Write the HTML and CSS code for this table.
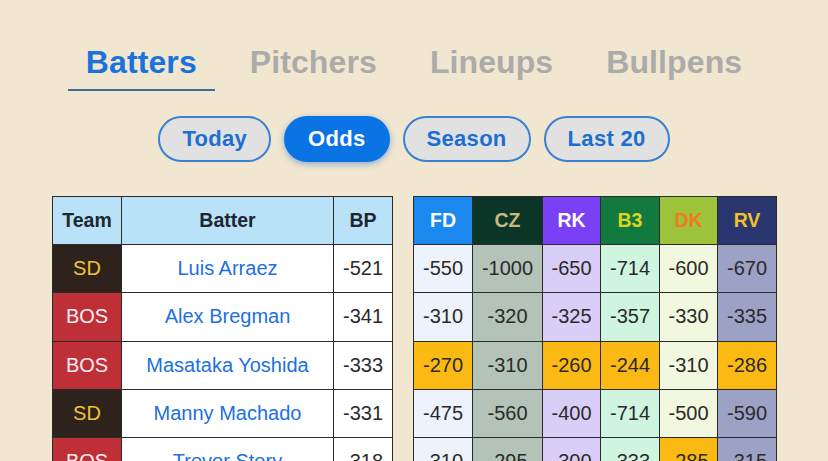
FILE: index.html
```html
<!DOCTYPE html>
<html>
<head>
<meta charset="utf-8">
<link rel="stylesheet" href="styles.css">
</head>
<body>
<div class="page">
  <nav class="tabs">
    <span class="tab active">Batters</span>
    <span class="tab">Pitchers</span>
    <span class="tab">Lineups</span>
    <span class="tab">Bullpens</span>
  </nav>
  <div class="pills">
    <span class="pill">Today</span>
    <span class="pill on">Odds</span>
    <span class="pill">Season</span>
    <span class="pill">Last 20</span>
  </div>
  <div class="tables">
    <table class="tbl left">
      <colgroup><col class="c-team"><col class="c-batter"><col class="c-bp"></colgroup>
      <thead><tr><th>Team</th><th>Batter</th><th>BP</th></tr></thead>
      <tbody>
        <tr><td class="sd">SD</td><td class="name">Luis Arraez</td><td class="bp">-521</td></tr>
        <tr><td class="bos">BOS</td><td class="name">Alex Bregman</td><td class="bp">-341</td></tr>
        <tr><td class="bos">BOS</td><td class="name">Masataka Yoshida</td><td class="bp">-333</td></tr>
        <tr><td class="sd">SD</td><td class="name">Manny Machado</td><td class="bp">-331</td></tr>
        <tr><td class="bos">BOS</td><td class="name">Trevor Story</td><td class="bp">-318</td></tr>
      </tbody>
    </table>
    <table class="tbl right">
      <colgroup><col class="c-fd"><col class="c-cz"><col class="c-rk"><col class="c-b3"><col class="c-dk"><col class="c-rv"></colgroup>
      <thead><tr><th class="fd">FD</th><th class="cz">CZ</th><th class="rk">RK</th><th class="b3">B3</th><th class="dk">DK</th><th class="rv">RV</th></tr></thead>
      <tbody>
        <tr><td class="fd">-550</td><td class="cz">-1000</td><td class="rk">-650</td><td class="b3">-714</td><td class="dk">-600</td><td class="rv">-670</td></tr>
        <tr><td class="fd">-310</td><td class="cz">-320</td><td class="rk">-325</td><td class="b3">-357</td><td class="dk">-330</td><td class="rv">-335</td></tr>
        <tr><td class="hi">-270</td><td class="cz">-310</td><td class="hi">-260</td><td class="hi">-244</td><td class="dk">-310</td><td class="hi">-286</td></tr>
        <tr><td class="fd">-475</td><td class="cz">-560</td><td class="rk">-400</td><td class="b3">-714</td><td class="dk">-500</td><td class="rv">-590</td></tr>
        <tr><td class="fd">-310</td><td class="cz">-295</td><td class="rk">-300</td><td class="b3">-333</td><td class="hi">-285</td><td class="rv">-315</td></tr>
      </tbody>
    </table>
  </div>
</div>
</body>
</html>
```
FILE: styles.css
```css
html, body {
  margin: 0;
  padding: 0;
}
body {
  background: #f1e6cf;
  font-family: "Liberation Sans", Arial, sans-serif;
  height: 461px;
  overflow: hidden;
}
.page {
  display: flex;
  flex-direction: column;
  align-items: center;
  padding-top: 42px;
}
.tabs {
  display: flex;
  gap: 17px;
}
.tab {
  font-size: 32px;
  font-weight: bold;
  line-height: 40px;
  color: #ababab;
  padding: 0 18px 7px;
  border-bottom: 2px solid transparent;
  letter-spacing: 0.1px;
}
.tab.active {
  color: #1a72dc;
  border-bottom-color: #3e6b96;
}
.pills {
  display: flex;
  gap: 13px;
  margin-top: 25px;
}
.pill {
  font-size: 22px;
  font-weight: bold;
  line-height: 42px;
  padding: 0 22px;
  letter-spacing: 0.3px;
  border: 2px solid #3a80d3;
  border-radius: 23px;
  background: #e2e1e1;
  color: #1b6fd3;
}
.pill.on {
  background: #0a74e4;
  border-color: #0a74e4;
  color: #fff;
  box-shadow: 0 2px 6px rgba(10, 100, 220, 0.45);
}
.tables {
  display: flex;
  gap: 20px;
  margin-top: 34px;
  padding-left: 1px;
}
.tbl {
  border-collapse: collapse;
  table-layout: fixed;
  font-size: 20px;
  color: #2a2a2a;
}
.tbl th, .tbl td {
  border: 1px solid #2b2b2b;
  padding: 0;
  text-align: center;
  white-space: nowrap;
  overflow: hidden;
}
.tbl tr {
  height: 48.3px;
}
.tbl thead tr {
  height: 48px;
}
.tbl th {
  font-weight: bold;
  font-size: 19.5px;
}
.left { width: 340px; }
.right { width: 363px; }
.c-team { width: 69px; }
.c-batter { width: 212px; }
.c-bp { width: 59px; }
.c-fd { width: 59px; }
.c-cz { width: 70px; }
.c-rk { width: 58px; }
.c-b3 { width: 59px; }
.c-dk { width: 58px; }
.c-rv { width: 59px; }
.left th {
  background: #b9e2f8;
  color: #1e2630;
}
.sd {
  background: #2e221c;
  color: #efc337;
}
.bos {
  background: #bf2f38;
  color: #f8eeee;
}
.name {
  background: #fff;
  color: #2070e2;
}
.bp {
  background: #fff;
}
.right td.fd { background: #edf3fc; }
.right td.cz { background: #b3c3b8; }
.right td.rk { background: #d8cef8; }
.right td.b3 { background: #d0f5df; }
.right td.dk { background: #f1f8df; }
.right td.rv { background: #9ca2c6; }
.right td.hi { background: #fbb914; }
.right th.fd { background: #1a88ee; color: #fff; }
.right th.cz { background: #0b3526; color: #c9b87f; }
.right th.rk { background: #7a40f6; color: #fff; }
.right th.b3 { background: #127a3e; color: #dcd41e; }
.right th.dk { background: #9cc33a; color: #f07a22; }
.right th.rv { background: #2a3670; color: #f0c22a; }
```
